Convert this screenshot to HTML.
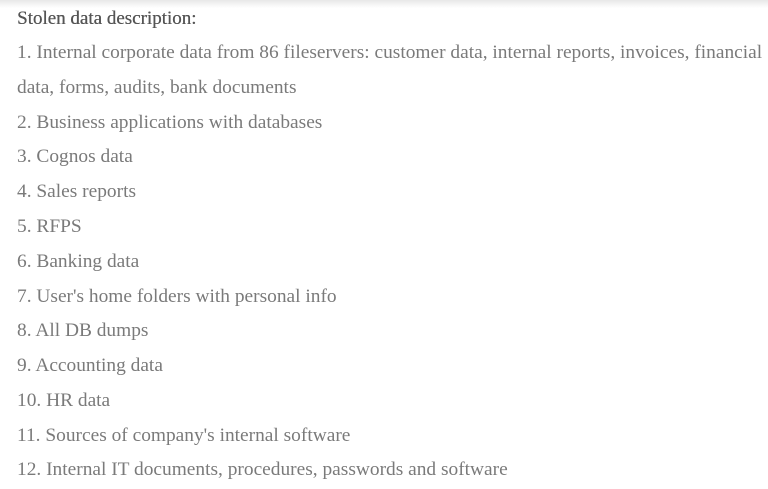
<!DOCTYPE html>
<html><head><meta charset="utf-8"><style>
html,body{margin:0;padding:0;width:768px;height:489px;overflow:hidden;background:#fff}
body{background:linear-gradient(#e8e8e8,#fff 8px);font-family:"Liberation Serif",serif;font-size:19.4px;color:#7a7a7a;}
.l{position:absolute;left:17px;white-space:nowrap;line-height:20px;margin-top:1.5px}
.t{color:#555;font-size:19px;text-shadow:0.3px 0 0 #555}
</style></head><body>
<div class="l t" style="top:7px">Stolen data description:</div>
<div class="l" style="top:41px">1. Internal corporate data from 86 fileservers: customer data, internal reports, invoices, financial</div>
<div class="l" style="top:76px">data, forms, audits, bank documents</div>
<div class="l" style="top:111px">2. Business applications with databases</div>
<div class="l" style="top:145px">3. Cognos data</div>
<div class="l" style="top:180px">4. Sales reports</div>
<div class="l" style="top:215px">5. RFPS</div>
<div class="l" style="top:250px">6. Banking data</div>
<div class="l" style="top:285px">7. User's home folders with personal info</div>
<div class="l" style="top:319px">8. All DB dumps</div>
<div class="l" style="top:354px">9. Accounting data</div>
<div class="l" style="top:389px">10. HR data</div>
<div class="l" style="top:424px">11. Sources of company's internal software</div>
<div class="l" style="top:458px">12. Internal IT documents, procedures, passwords and software</div>
</body></html>
